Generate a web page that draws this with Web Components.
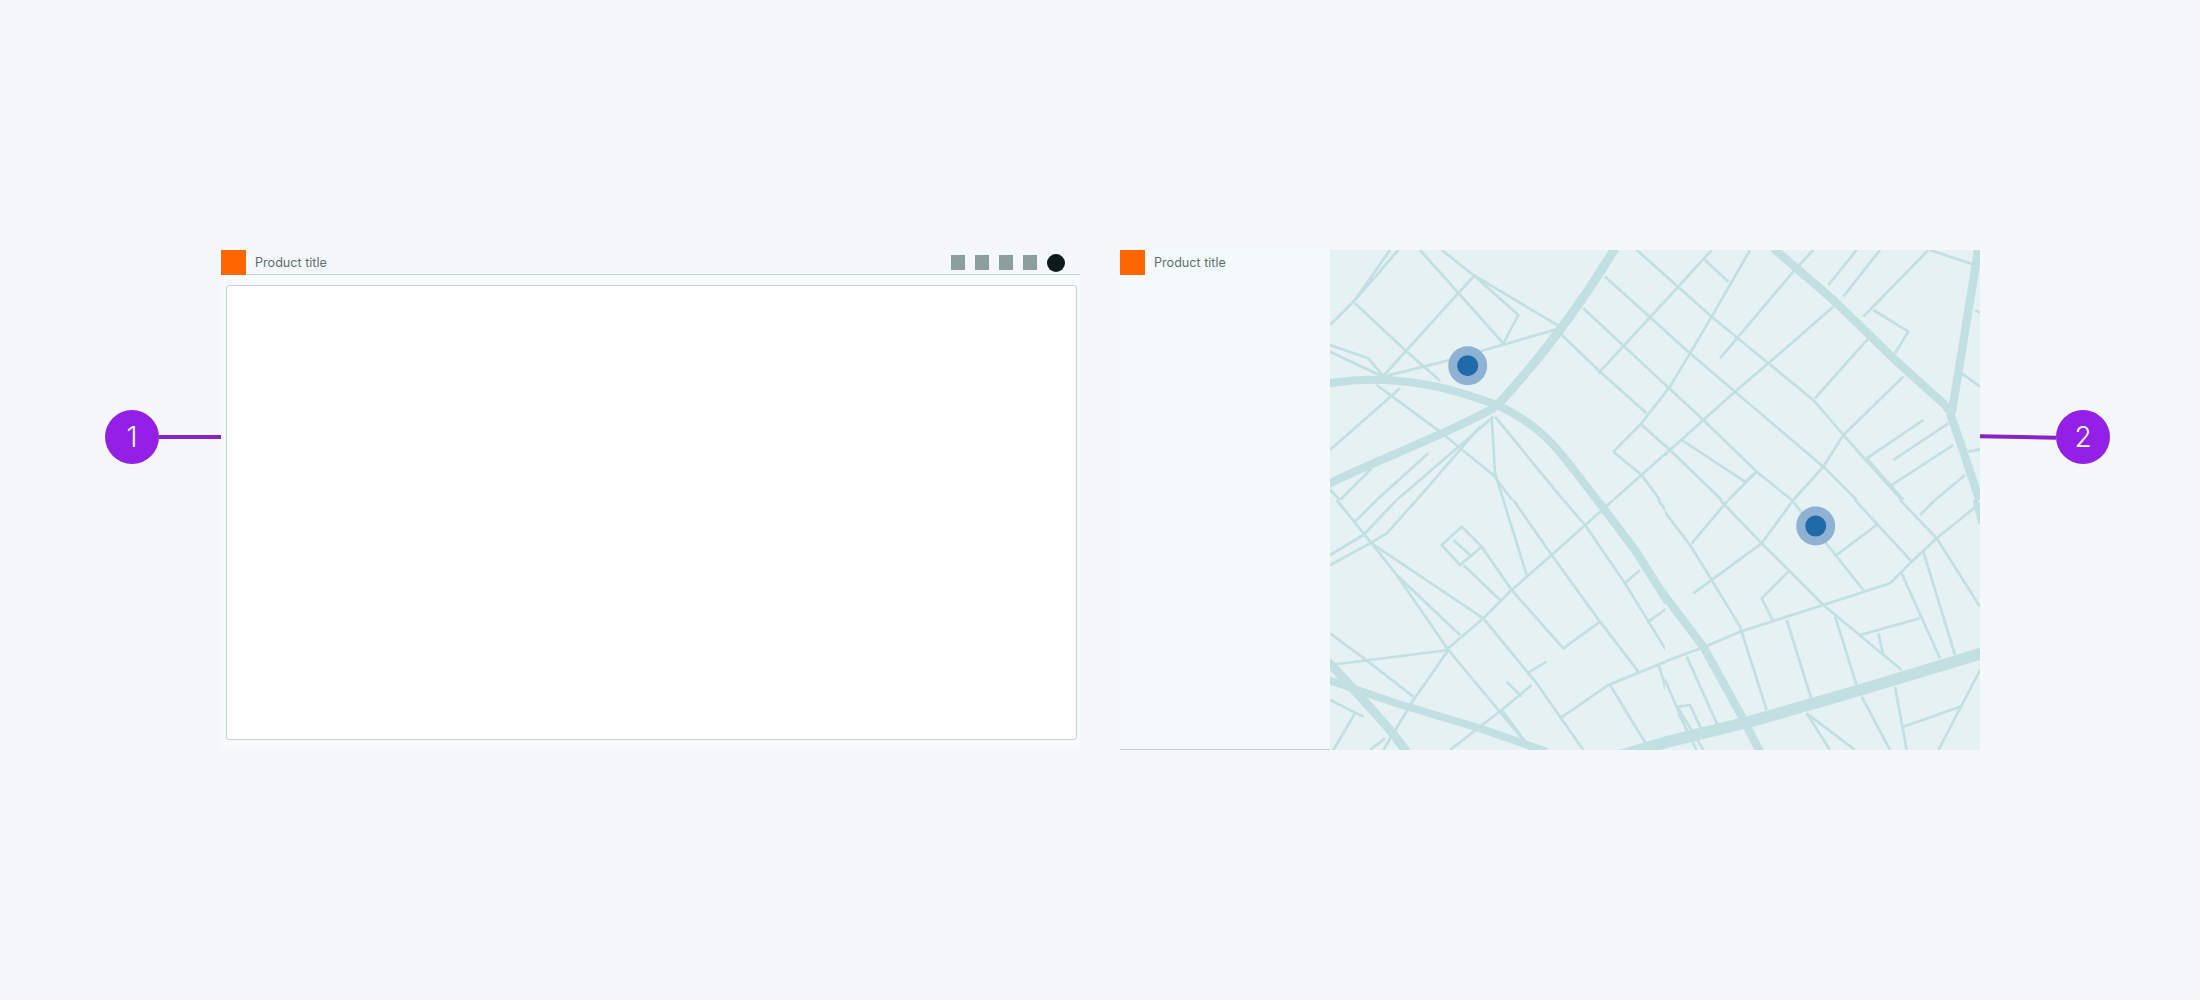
<!DOCTYPE html>
<html><head><meta charset="utf-8"><title>Layouts</title>
<style>html,body{margin:0;padding:0;background:#fff}</style></head>
<body>
<layout-stage>
  <call-out n="1" side="left"></call-out>
  <app-shell title-text="Product title" actions></app-shell>
  <map-shell title-text="Product title"></map-shell>
  <call-out n="2" side="right"></call-out>
</layout-stage>
<script>
class LayoutStage extends HTMLElement{constructor(){super();this.attachShadow({mode:'open'}).innerHTML=`<style>
:host{display:flex;box-sizing:border-box;width:2200px;height:1000px;padding:250px 0 0 105px;background:#f4f8fb;align-items:flex-start;font-family:Inter,"Liberation Sans",sans-serif;overflow:hidden}
::slotted(app-shell){margin-right:40px}
</style><slot></slot>`}}
customElements.define('layout-stage',LayoutStage);

class CallOut extends HTMLElement{connectedCallback(){const n=this.getAttribute('n'),s=this.getAttribute('side');
const r=this.attachShadow({mode:'open'});
r.innerHTML=`<style>
:host{display:flex;align-items:center;margin-top:160px;flex-direction:${s==='left'?'row':'row-reverse'}}
.c{width:54px;height:54px;border-radius:50%;background:#9320e4;color:#fff;display:flex;align-items:center;justify-content:center;font:300 28px Inter,"Liberation Sans",sans-serif;flex:none}
.l{width:${s==='left'?62:76}px;height:4px;background:#8a22c8;${s==='right'?'transform:rotate(1deg)':''}}
</style><div class="c">${n}</div><div class="l"></div>`}}
customElements.define('call-out',CallOut);

class BrandRow extends HTMLElement{constructor(){super();this.attachShadow({mode:'open'}).innerHTML=`<style>
:host{display:flex;align-items:flex-start;height:25px;gap:9px;font:400 12.6px/1 Inter,"Liberation Sans",sans-serif;color:#5e7170}
.m{width:25px;height:25px;background:#ff6600;flex:none}
.t{padding-top:7px}
</style><div class="m"></div><div class="t"><slot></slot></div>`}}
customElements.define('brand-row',BrandRow);

class AppShell extends HTMLElement{connectedCallback(){const r=this.attachShadow({mode:'open'});
r.innerHTML=`<style>
:host{display:block;width:859px;height:500px;background:linear-gradient(#f4f8fb 0 24px,#f6fafa 24px)}
.h{display:flex;justify-content:space-between;height:24px;border-bottom:1px solid #c3d6d2}
.a{display:flex;align-items:center;gap:10px;padding:2px 15px 0 0;height:21px}
.a i{width:14px;height:15px;background:#8ba09b;display:block}
.a b{width:18px;height:18px;border-radius:50%;background:#0d1a18;display:block}
.b{box-sizing:border-box;width:851px;height:455px;margin:10px 0 0 5px;background:#fff;border:1px solid #c5d4d3;border-radius:3px}
</style><div class="h"><brand-row>${this.getAttribute('title-text')}</brand-row><div class="a"><i></i><i></i><i></i><i></i><b></b></div></div><div class="b"></div>`}}
customElements.define('app-shell',AppShell);

const TILES={
t6:{x:1330,y:250,w:335,h:250,thick:[
 ['M-5 400C60 390 150 385 230 395C330 405 420 435 500 465C590 505 650 555 700 620C740 670 770 710 805 755',24],
 ['M505 462C600 360 730 200 855 -5',27],
 ['M-5 702C70 665 130 640 200 610C280 575 400 525 495 472',25]],
 thin:['M0 225L75 150L180 0','M75 150L205 0','M75 160L225 300L330 392','M140 405L330 545L490 675L550 755','M-20 700L35 755','M0 285L115 325L160 378','M0 305L155 378','M160 378L430 80','M430 75L565 195L520 280','M270 0L520 280','M335 0L430 75L690 230','M690 250L810 365L950 490','M160 380L340 335L680 238','M210 415L0 600','M490 500L200 750','M450 530L260 750','M295 610L140 750','M125 655L30 750','M485 500L495 670L520 750','M495 500L700 750','M760 175L1025 422','M825 80L1025 260','M920 0L1025 93','M805 370L1030 126','M850 605L930 525L1030 397','M850 605L935 675L990 750','M1030 590L850 750','M930 520L1030 610']},
t7:{x:1665,y:250,w:315,h:250,ox:15,thick:[
 ['M340 -5L520 150L700 325L850 460L875 490',25],
 ['M955 -5L945 60L875 490',25],
 ['M870 490L905 590L960 755',25]],
 thin:['M155 0L55 110L0 170','M135 30L205 95','M270 0L155 200L90 310L30 410L0 448','M0 62L155 200L325 340L460 450L550 555L725 750','M0 229L90 310L225 425L490 650L590 750','M460 0L400 65L235 260L180 325','M590 0L505 105','M660 0L550 140','M520 170L325 340L225 425L130 510L30 600L0 630','M625 265L465 445','M730 380L550 555L490 650L400 750','M805 0L610 200','M640 180L745 245L705 310','M810 0L945 45','M945 180L960 188','M905 370L960 410','M0 389L130 510L290 665L395 750','M0 570L30 600L185 750','M65 570L255 695L290 665L205 750','M790 510L620 625','M700 630L865 520','M880 585L695 705','M620 625L730 750','M925 605L960 598','M915 675L825 750']},
t8:{x:1330,y:500,w:335,h:250,thick:[
 ['M-5 485L100 600L180 690L230 755',27],
 ['M-5 540L200 610L450 685L650 755',23],
 ['M798 -5L915 150L1035 340',25],
 ['M860 770L1025 722',35]],
 thin:['M395 80L455 140L390 195L335 135Z','M370 120L420 165','M455 140L545 270L700 445L810 365','M400 195L510 300','M20 0L125 130L200 225L355 450L580 720L600 750','M125 130L460 355L620 550L760 750','M200 225L390 405','M0 195L120 130L170 100L260 0','M0 165L100 105L200 0','M75 65L140 0','M0 400L115 485L250 590','M0 495L355 450','M355 450L250 600L160 750','M355 445L460 355L545 270L665 165L850 0','M520 0L590 225','M550 0L665 165L810 365L925 515','M700 0L765 75L885 250L1020 470','M885 250L930 210','M955 365L1010 325','M985 0L1020 50','M590 520L650 485','M530 545L575 590','M605 555L515 630L360 750','M690 655L835 555L1020 480','M840 555L950 735','M985 490L1020 610','M75 640L10 750','M0 600L100 650','M165 715L120 750','M515 630L590 730']},
t9:{x:1665,y:500,w:315,h:250,ox:15,thick:[
 ['M-5 262L130 440L240 640L300 755',25],
 ['M-5 732L270 665L600 570L965 460',35],
 ['M945 -5L962 70',16]],
 thin:['M10 30L90 135L155 240L240 380L320 630','M95 130L205 0','M180 0L305 130L490 315L725 510','M100 280L305 130L400 0','M385 215L305 295L340 365','M0 490L135 440L240 395L490 315L690 250L755 185L830 115L960 10','M720 0L830 115L960 320','M585 0L755 185','M395 0L610 270','M530 165L650 75','M780 45L825 0','M725 220L840 475','M790 155L885 465','M525 350L590 555','M600 405L780 355','M655 400L670 465','M380 360L455 600','M80 470L175 680','M0 505L80 690','M55 620L90 615L125 690','M55 625L130 750','M55 640L110 750','M705 560L740 750','M605 590L690 750','M440 640L585 750','M440 640L510 750','M730 680L900 620','M960 510L835 750']}
};
function tile(t){const ox=t.ox||0;
 const thin=t.thin.map(d=>`<path d="${d}"/>`).join('');
 const thick=t.thick.map(([d,w])=>`<path d="${d}" stroke-width="${w}"/>`).join('');
 return `<svg x="${t.x}" y="${t.y}" width="${t.w}" height="${t.h}" viewBox="${ox} 0 ${t.w*3} ${t.h*3}"><g fill="none" stroke="#c2dfe1" stroke-width="8" stroke-linejoin="round">${thin}${thick}</g></svg>`}
class CityMap extends HTMLElement{connectedCallback(){const r=this.attachShadow({mode:'open'});
r.innerHTML=`<style>:host{display:block;width:650px;height:500px;background:#e5f1f3;flex:none}svg{display:block}</style>
<svg width="650" height="500" viewBox="1330 250 650 500">${Object.values(TILES).map(tile).join('')}
<circle cx="1467.7" cy="365.7" r="19.5" fill="#8fb2d3"/><circle cx="1467.7" cy="365.7" r="10.5" fill="#1f6baa"/>
<circle cx="1815.7" cy="526" r="19.5" fill="#8fb2d3"/><circle cx="1815.7" cy="526" r="10.5" fill="#1f6baa"/></svg>`}}
customElements.define('city-map',CityMap);

class MapShell extends HTMLElement{connectedCallback(){const r=this.attachShadow({mode:'open'});
r.innerHTML=`<style>:host{display:flex;width:860px;height:500px}
.s{box-sizing:border-box;width:210px;height:500px;border-bottom:1px solid #c5d4d3;background:#f4f9fa}
</style><div class="s"><brand-row>${this.getAttribute('title-text')}</brand-row></div><city-map></city-map>`}}
customElements.define('map-shell',MapShell);
</script>
</body></html>
